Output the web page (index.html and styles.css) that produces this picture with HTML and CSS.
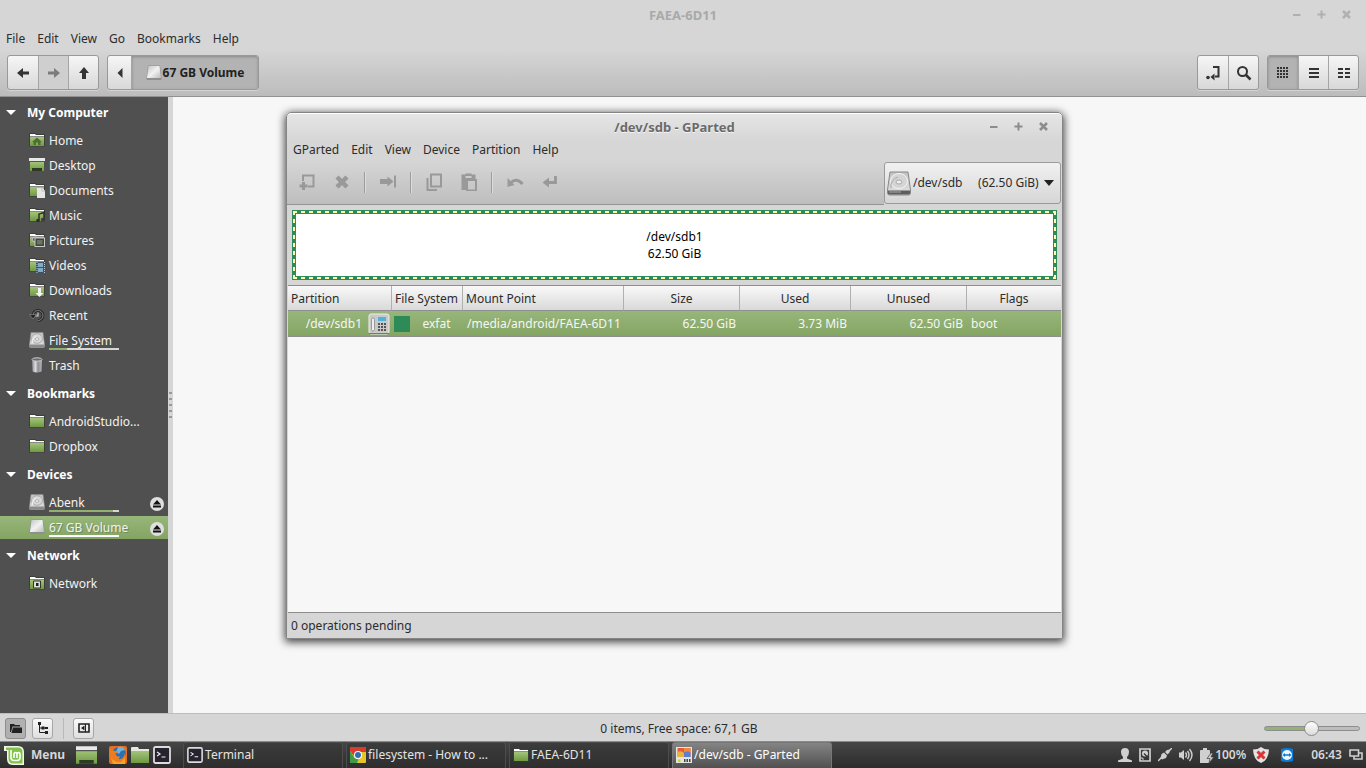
FILE: index.html
```html
<!DOCTYPE html>
<html lang="en">
<head>
<meta charset="utf-8">
<title>FAEA-6D11</title>
<link rel="stylesheet" href="styles.css">
</head>
<body>
<svg class="defs" aria-hidden="true">
  <defs>
    <linearGradient id="gGreen" x1="0" y1="0" x2="0" y2="1"><stop offset="0" stop-color="#a3c47a"/><stop offset="1" stop-color="#6f9a41"/></linearGradient>
    <linearGradient id="gSilver" x1="0" y1="0" x2="1" y2="1"><stop offset="0" stop-color="#c4c4c4"/><stop offset=".5" stop-color="#f2f2f2"/><stop offset="1" stop-color="#bcbcbc"/></linearGradient>
    <linearGradient id="gCan" x1="0" y1="0" x2="1" y2="0"><stop offset="0" stop-color="#8b8b8f"/><stop offset=".35" stop-color="#dcdce0"/><stop offset=".6" stop-color="#8e8e93"/><stop offset="1" stop-color="#b5b5ba"/></linearGradient>
    <linearGradient id="gDisk" x1="0" y1="0" x2="0" y2="1"><stop offset="0" stop-color="#c2c2c2"/><stop offset="1" stop-color="#e2e2e2"/></linearGradient>
  </defs>
  <symbol id="folder" viewBox="0 0 16 16">
    <path d="M0 14.500V2q0-1 1-1h5.500l1 1H15q1 0 1 1v11.500z" fill="#3b3f36"/>
    <path d="M1 2h5l1 1h8v1H1z" fill="#fff"/>
    <path d="M1 4h14v1H1z" fill="#8a8a8a"/>
    <path d="M1 5h14v9H1z" fill="url(#gGreen)"/>
  </symbol>
  <symbol id="desk" viewBox="0 0 16 16">
    <path d="M0 1h16v3H0z" fill="#e9e9ea"/><path d="M0 4h16v1H0z" fill="#555"/>
    <path d="M1 5h14v9H1z" fill="url(#gGreen)"/>
    <path d="M3 11h10v3H3z" fill="#2e3a22"/><path d="M.5 5v9" stroke="#456028"/>
  </symbol>
  <symbol id="disk" viewBox="0 0 16 16">
    <path d="M2 .5h12l1.500 12v2q0 1-1 1h-13q-1 0-1-1v-2z" fill="url(#gDisk)" stroke="#8d8d8d" stroke-width=".6"/>
    <path d="M.5 12.500h15v2q0 1-1 1h-13q-1 0-1-1z" fill="#8b8b8b"/>
    <ellipse cx="8" cy="6.500" rx="5.500" ry="4.800" fill="#d7d7d7" stroke="#aaa"/>
    <ellipse cx="8" cy="7" rx="1.800" ry="1.300" fill="#f5f5f5" stroke="#999" stroke-width=".7"/>
    <path d="M3.500 11q-.5-5 4-7" fill="none" stroke="#f4f4f4"/>
  </symbol>
  <symbol id="volume" viewBox="0 0 16 16">
    <path d="M2 .5h12l1.500 12.500v1q0 1-1 1h-13q-1 0-1-1v-1z" fill="#8f8f8f"/>
    <path d="M2.500 1h11l1.500 12H1z" fill="url(#gSilver)"/>
  </symbol>
  <symbol id="eject" viewBox="0 0 14 14">
    <circle cx="7" cy="7" r="7" fill="#dedede"/><path d="M7 3l4 4.500H3zM3 8.500h8v2H3z" fill="#111"/>
  </symbol>
  <symbol id="term" viewBox="0 0 18 18">
    <rect x="1" y="1" width="16" height="16" rx="1.500" fill="#26222e" stroke="#dcdcdc" stroke-width="1.800"/>
    <path d="M4 6l3 2-3 2M8.500 11h4" fill="none" stroke="#eee" stroke-width="1.200"/>
  </symbol>
</svg>

<div class="desktop">
  <section class="nemo">
    <header class="titlebar">
      <h1>FAEA-6D11</h1>
      <div class="winbtns faded">
        <button aria-label="Minimize"><svg width="9" height="9"><path d="M1 5h7.500" /></svg></button>
        <button aria-label="Maximize"><svg width="9" height="9"><path d="M.5 4.500h8M4.500.5v8"/></svg></button>
        <button aria-label="Close"><svg width="9" height="9"><path class="x" d="M1 1l7 7M8 1l-7 7"/></svg></button>
      </div>
    </header>
    <nav class="menubar">
      <button>File</button><button>Edit</button><button>View</button><button>Go</button><button>Bookmarks</button><button>Help</button>
    </nav>
    <div class="toolbar">
      <div class="group">
        <button class="tool" aria-label="Back"><svg width="14" height="12"><path d="M1 6l6-5v3.500h6v3H7V11z"/></svg></button>
        <button class="tool off" aria-label="Forward"><svg width="14" height="12"><path d="M13 6L7 1v3.500H1v3h6V11z"/></svg></button>
        <button class="tool" aria-label="Up"><svg width="12" height="14"><path d="M6 1L1 7h3v6h4V7h3z"/></svg></button>
      </div>
      <div class="group path">
        <button class="tool narrow" aria-label="Scroll left"><svg width="6" height="10"><path d="M5.500 0v10L.5 5z"/></svg></button>
        <button class="tool pressed crumb"><svg width="16" height="16"><use href="#volume"/></svg>67 GB Volume</button>
      </div>
      <div class="spring"></div>
      <div class="group">
        <button class="tool" aria-label="Toggle location"><svg width="16" height="16"><circle cx="3" cy="12.500" r="1.800"/><path d="M8 2h5.500v9.500H10" fill="none" stroke="#333" stroke-width="2"/><path d="M5.500 12l4-3.500v7z"/></svg></button>
        <button class="tool" aria-label="Search"><svg width="16" height="16"><circle cx="6.500" cy="6.500" r="4.500" fill="none" stroke="#333" stroke-width="2"/><path d="M10 10l4.500 4.500" stroke="#333" stroke-width="2.500"/></svg></button>
      </div>
      <div class="group">
        <button class="tool pressed" aria-label="Icon view"><svg width="12" height="11" shape-rendering="crispEdges"><path d="M0 0h2v2H0zM3 0h2v2H3zM6 0h2v2H6zM9 0h2v2H9zM0 3h2v2H0zM3 3h2v2H3zM6 3h2v2H6zM9 3h2v2H9zM0 6h2v2H0zM3 6h2v2H3zM6 6h2v2H6zM9 6h2v2H9zM0 9h2v2H0zM3 9h2v2H3zM6 9h2v2H6zM9 9h2v2H9z"/></svg></button>
        <button class="tool" aria-label="List view"><svg width="12" height="12"><path d="M1 2h10M1 6h10M1 10h10" stroke="#333" stroke-width="2"/></svg></button>
        <button class="tool" aria-label="Compact view"><svg width="12" height="12"><path d="M0 2h5M7 2h5M0 6h5M7 6h5M0 10h5M7 10h5" stroke="#333" stroke-width="2"/></svg></button>
      </div>
    </div>

    <div class="content">
      <aside class="sidebar">
        <button class="head"><i class="tri"></i>My Computer</button>
        <a href="#home"><svg class="ic" viewBox="0 0 16 16"><use href="#folder"/><path d="M8 5.500l5 4.500h-1.500v3h-7v-3H3z" fill="#4d7030"/><path d="M7 10.500h2V13H7z" fill="#86ab5a"/></svg><span>Home</span></a>
        <a href="#desktop"><svg class="ic"><use href="#desk"/></svg><span>Desktop</span></a>
        <a href="#documents"><svg class="ic" viewBox="0 0 16 16"><use href="#folder"/><path d="M8 6h5l3 3v7H8z" fill="#e6e6e6"/><path d="M13 6v3h3" fill="#fff" stroke="#999" stroke-width=".6"/></svg><span>Documents</span></a>
        <a href="#music"><svg class="ic" viewBox="0 0 16 16"><use href="#folder"/><path d="M10 13V7l5-1.500V12" fill="none" stroke="#2f2f2f" stroke-width="1.500"/><circle cx="9" cy="13.500" r="1.800" fill="#2f2f2f"/><circle cx="13.700" cy="12.500" r="1.800" fill="#3d3d3d"/></svg><span>Music</span></a>
        <a href="#pictures"><svg class="ic" viewBox="0 0 16 16"><use href="#folder"/><circle cx="6" cy="7.500" r="2.500" fill="#555" stroke="#ccc"/><rect x="6" y="6" width="9.500" height="8.500" fill="#42453e" stroke="#c9c9c9"/><path d="M8 8h5.500v4.500H8z" fill="#6c755f"/></svg><span>Pictures</span></a>
        <a href="#videos"><svg class="ic" viewBox="0 0 16 16"><use href="#folder"/><path d="M7 5h9v11H7z" fill="#3c5262"/><path d="M9 6h5v4H9zM9 11h5v4H9z" fill="#83abc5"/><path d="M8 5v11M15.500 5v11" stroke="#b9c9d3" stroke-dasharray="1 1"/></svg><span>Videos</span></a>
        <a href="#downloads"><svg class="ic" viewBox="0 0 16 16"><use href="#folder"/><path d="M9 6h3v5h2.500l-4 4-4-4H9z" fill="#f4f4f4"/></svg><span>Downloads</span></a>
        <a href="#recent"><svg class="ic" viewBox="0 0 16 16"><path d="M4 9a5 5 0 1 1 5 4.500" fill="none" stroke="#262626" stroke-width="2.800"/><path d="M4 9a5 5 0 1 1 5 4.500" fill="none" stroke="#858585" stroke-width="1"/><path d="M.5 7.500h7L4 12z" fill="#222" stroke="#858585" stroke-width=".7"/><path d="M9 5.500V9H6.500" fill="none" stroke="#ccc" stroke-width="1.200"/></svg><span>Recent</span></a>
        <a href="#filesystem"><svg class="ic"><use href="#disk"/></svg><span>File System</span><progress value="26" max="100" aria-label="File System usage"></progress></a>
        <a href="#trash"><svg class="ic" viewBox="0 0 16 16"><path d="M3 2.500h10l-.5 12q-4.500 2-9 0z" fill="url(#gCan)"/><ellipse cx="8" cy="2.500" rx="5" ry="1.700" fill="#6b6b6f" stroke="#ccccd0"/></svg><span>Trash</span></a>
        <button class="head"><i class="tri"></i>Bookmarks</button>
        <a href="#androidstudio"><svg class="ic"><use href="#folder"/></svg><span>AndroidStudio...</span></a>
        <a href="#dropbox"><svg class="ic"><use href="#folder"/></svg><span>Dropbox</span></a>
        <button class="head"><i class="tri"></i>Devices</button>
        <a href="#abenk"><svg class="ic"><use href="#disk"/></svg><span>Abenk</span><progress value="92" max="100" aria-label="Abenk usage"></progress><svg class="ej"><use href="#eject"/></svg></a>
        <a href="#volume67" class="current"><svg class="ic"><use href="#volume"/></svg><span>67 GB Volume</span><progress value="0" max="100" aria-label="67 GB Volume usage"></progress><svg class="ej"><use href="#eject"/></svg></a>
        <button class="head"><i class="tri"></i>Network</button>
        <a href="#network"><svg class="ic" viewBox="0 0 16 16"><use href="#folder"/><path d="M4.500 6h7v7h-7z" fill="#ddd" stroke="#333"/><path d="M7 8h2.500v3H7z" fill="#222"/></svg><span>Network</span></a>
      </aside>
      <div class="grip"><i></i><i></i><i></i><i></i><i></i></div>
      <main class="files"></main>
    </div>

    <footer class="status">
      <button class="mini pressed" aria-label="Show places"><svg width="12" height="10"><path d="M0 9V1h4l1 1h5v1.500H2.500L1 9zM3 4.500h9V10H1.500z"/></svg></button>
      <button class="mini" aria-label="Show tree"><svg width="12" height="12"><path d="M2.500 1v9.500H10M2.500 6H9" fill="none" stroke="#222"/><path d="M1 0h3v3H1zM4.500 4.500h3v3h-3zM8 9h3v3H8zM8 5h3v2H8z"/></svg></button>
      <i class="vsep"></i>
      <button class="mini" aria-label="Hide sidebar"><svg width="12" height="10"><path d="M1 1h10v8H1z" fill="none" stroke="#222" stroke-width="1.600"/><path d="M6.500 2.500v5L3 5zM7 1h1v8H7z"/></svg></button>
      <output>0 items, Free space: 67,1 GB</output>
      <input class="zoom" type="range" min="0" max="100" value="49" aria-label="Zoom">
    </footer>
  </section>

  <section class="gparted">
    <header class="titlebar">
      <h2>/dev/sdb - GParted</h2>
      <div class="winbtns">
        <button aria-label="Minimize"><svg width="9" height="9"><path d="M1 5h7.500"/></svg></button>
        <button aria-label="Maximize"><svg width="9" height="9"><path d="M.5 4.500h8M4.500.5v8"/></svg></button>
        <button aria-label="Close"><svg width="9" height="9"><path class="x" d="M1 1l7 7M8 1l-7 7"/></svg></button>
      </div>
    </header>
    <nav class="menubar">
      <button>GParted</button><button>Edit</button><button>View</button><button>Device</button><button>Partition</button><button>Help</button>
    </nav>
    <div class="gbar">
      <div class="gtools">
        <button aria-label="New" disabled><svg viewBox="0 0 18 18"><path d="M5 8V2.500h10.500v11H10" /><path d="M5.500 9v8M1.500 13h8" stroke-width="3"/></svg></button>
        <button aria-label="Delete" disabled><svg viewBox="0 0 18 18"><path d="M4 4l10 10M14 4L4 14" stroke-width="4.500"/></svg></button>
        <i class="gsep"></i>
        <button aria-label="Resize/Move" disabled><svg viewBox="0 0 18 18"><path d="M1 8.500h8" stroke-width="5"/><path d="M8.500 3.500v10l6-5z" fill="#999" stroke="none"/><path d="M16 2.500v12"/></svg></button>
        <i class="gsep"></i>
        <button aria-label="Copy" disabled><svg viewBox="0 0 18 18"><path d="M6 1.500h10v12H6z"/><path d="M2.500 5v12H12"/></svg></button>
        <button aria-label="Paste" disabled><svg viewBox="0 0 18 18"><path d="M1.500 1.500h4v-1h6v1h4V6h-9v11h-5z" fill="#999" stroke="none"/><path d="M7 7h9v10.500H7z"/><path d="M5.500 4h6" stroke="#ccc"/></svg></button>
        <i class="gsep"></i>
        <button aria-label="Undo" disabled><svg viewBox="0 0 18 18"><path d="M4.500 10q6-6 12 1" stroke-width="3"/><path d="M1.500 5v9l7-2z" fill="#999" stroke="none"/></svg></button>
        <button aria-label="Apply" disabled><svg viewBox="0 0 18 18"><path d="M14.500 3v6.500H7" stroke-width="2.800"/><path d="M1.500 9.500l6.500-5v10z" fill="#999" stroke="none"/></svg></button>
      </div>
      <div class="device">
        <svg width="24" height="25" viewBox="0 0 24 25"><path d="M3 1h18l2.500 18v3q0 2-2 2h-19q-2 0-2-2v-3z" fill="url(#gDisk)" stroke="#888"/><path d="M1 19.500h22V22q0 1.500-1.500 1.500h-19Q1 23.500 1 22z" fill="#5c5c5c"/><path d="M2 21h12" stroke="#aaa"/><ellipse cx="12" cy="10" rx="8.500" ry="7.500" fill="#d4d4d4" stroke="#f4f4f4"/><ellipse cx="12" cy="11" rx="3" ry="2" fill="#eee" stroke="#aaa"/><path d="M4 17q-1-8 7-11" fill="none" stroke="#aaa"/></svg>
        <select aria-label="Device"><option>/dev/sdb &nbsp;&nbsp;&nbsp; (62.50 GiB)</option></select>
        <i class="caret"></i>
      </div>
    </div>
    <div class="mapwrap">
      <div class="map"><span>/dev/sdb1</span><span>62.50 GiB</span></div>
    </div>
    <div class="list">
      <table>
        <colgroup><col class="c104"><col class="c71"><col class="c161"><col class="c116"><col class="c111"><col class="c116"><col></colgroup>
        <thead><tr><th class="l">Partition</th><th class="l">File System</th><th class="l">Mount Point</th><th>Size</th><th>Used</th><th>Unused</th><th>Flags</th></tr></thead>
        <tbody><tr>
          <td><div class="cell end">/dev/sdb1<svg width="22" height="22" viewBox="0 0 22 22"><rect x="1" y="1" width="20" height="20" rx="2" fill="#c9c9c9" stroke="#eee"/><path d="M1 20.500h20" stroke="#777"/><rect x="3.500" y="5" width="3" height="13" rx="1.500" fill="#eee" stroke="#888" stroke-width=".8"/><path d="M10 4h8v4h-8z" fill="#4fb4dc"/><path d="M10 11h8M10 14h8M10 17h8" stroke="#555" stroke-width="2" stroke-dasharray="2 1"/></svg></div></td>
          <td><div class="cell"><i class="swatch"></i><span class="fs">exfat</span></div></td>
          <td class="l">/media/android/FAEA-6D11</td><td class="r">62.50 GiB</td><td class="r">3.73 MiB</td><td class="r">62.50 GiB</td><td class="l">boot</td>
        </tr></tbody>
      </table>
    </div>
    <footer class="pending">0 operations pending</footer>
  </section>
</div>

<footer class="panel">
  <button class="mint"><svg width="20" height="19" viewBox="0 0 20 19"><path d="M0 0h14q6 0 6 6v13H9q-6 0-6-6V5H0z" fill="#f2f8e8"/><path d="M2 1.500h12q4.500 0 4.500 4.500v11.500H9.500q-5 0-5-5V4H2z" fill="#83c34b"/><path d="M7 4v7.500q0 3 3 3h3q3 0 3-3V8.500q0-2-1.500-2T13 8.500V12M13 8.500q0-2-1.500-2T10 8.500V12" fill="none" stroke="#fff" stroke-width="1.600"/></svg>Menu</button>
  <div class="launch">
    <button class="showdesk" aria-label="Show desktop"><svg width="21" height="20" viewBox="0 0 16 16" preserveAspectRatio="none"><path d="M0 1h16v3H0z" fill="#e9e9ea"/><path d="M0 4h16v11H0z" fill="url(#gGreen)"/><path d="M0 4h16v1H0z" fill="#555"/><path d="M2.500 12h11v3h-11z" fill="#2e3a22"/></svg></button>
    <button aria-label="Firefox"><svg width="18" height="18" viewBox="0 0 18 18"><rect width="18" height="18" rx="2" fill="#e8701c"/><circle cx="10" cy="8" r="7" fill="#2b6fb4"/><path d="M9 1q5-1 7 3l-4 1-2 3-3-2z" fill="#6db4df"/><path d="M1 3q3 0 4 2 3-1 4 1L6.500 8q1 3 4 2.500 1 1-1 2.500 5 1 6.500-6 3 8-4 10-7 2-11-5-1-5 0-9z" fill="#ed7b20"/><path d="M2 12q4 5 10 4l4-4v6H4z" fill="#f5a52a"/></svg></button>
    <button aria-label="Files"><svg width="18" height="18" viewBox="0 0 18 18"><path d="M0 2q0-1 1-1h6l1 2h10v4H0z" fill="#e4e8dd"/><path d="M0 5h18v12H0z" fill="url(#gGreen)"/></svg></button>
    <button aria-label="Terminal"><svg width="18" height="18"><use href="#term"/></svg></button>
  </div>
  <div class="tasks">
    <button><svg width="16" height="16"><use href="#term"/></svg>Terminal</button>
    <button><svg width="16" height="16" viewBox="0 0 16 16"><rect width="16" height="16" rx="1" fill="#e8c42b"/><path d="M0 0h16v5H8L4.500 9.500 0 4z" fill="#d93b2f"/><path d="M0 4l4.500 7 4 1.500L7 16H0z" fill="#3f9c4a"/><circle cx="8" cy="8" r="4" fill="#fff"/><circle cx="8" cy="8" r="3" fill="#2f6fb8"/></svg>filesystem - How to ...</button>
    <button><svg width="16" height="16"><use href="#folder"/></svg>FAEA-6D11</button>
    <button class="active"><svg width="16" height="16" viewBox="0 0 16 16"><rect width="16" height="16" fill="#e4e4e4"/><path d="M1.500 1h13v9h-13z" fill="#e45b38"/><path d="M8 1h6.500v5L8 5z" fill="#ee883c"/><path d="M1.500 5Q5 3 8 6v4H1.500z" fill="#e8b43b"/><path d="M8 5.500q4-2 6.500 0V10H8z" fill="#5b7fd3"/><path d="M2 12.500h2.500V15H2z" fill="#c5d62c"/><path d="M8 13.500h7" stroke="#444" stroke-width="3" stroke-dasharray="1.500 1"/></svg>/dev/sdb - GParted</button>
  </div>
  <div class="tray">
    <svg width="14" height="14" viewBox="0 0 14 14"><path d="M7 0q4 0 4 4 0 3-2 5v1.500l5 2V14H0v-1.500l5-2V9Q3 7 3 4q0-4 4-4z"/></svg>
    <svg width="12" height="14" viewBox="0 0 12 14"><path d="M1 1h10v12H1z" fill="none" stroke="#d0d0d0" stroke-width="1.700"/><circle cx="6" cy="5.500" r="3"/><path d="M5 5.500l5 5" stroke="#3a3a3a" stroke-width="1.500"/><path d="M3 9v2h2" stroke="#d0d0d0" fill="none"/></svg>
    <svg width="14" height="14" viewBox="0 0 14 14"><path d="M0 13l4-4M10 4l4-4" stroke="#d0d0d0" stroke-width="1.500"/><path d="M2.500 10l1-4L6 4.500l3 3L8 10l-4 1.500zM7 4l2-2 3-.5-.5 3-2 2z"/></svg>
    <svg width="14" height="14" viewBox="0 0 14 14"><path d="M0 4.500h2L5 2v10L2 9.500H0z"/><path d="M6.500 4.500q2 2.500 0 5M8.500 3q3 4 0 8M10.500 1q5 6 0 12" fill="none" stroke="#d0d0d0" stroke-width="1.400"/></svg>
    <span class="battery"><svg width="14" height="15" viewBox="0 0 14 15"><path d="M0 3q0-1 1-1h2V0h4v2h2q1 0 1 1v12H0z"/><path d="M11 5L7 10.500h3L9 15l5-6h-3l2-4z" stroke="#3a3a3a" stroke-width=".7"/></svg>100%</span>
    <svg class="shield" width="16" height="16" viewBox="0 0 16 16"><path d="M8 0q3 2.500 8 2.500-.5 11-8 13.500Q.5 13.500 0 2.500 5 2.500 8 0z" fill="#e2e2e0"/><path d="M4.500 4.500l7 7M11.500 4.500l-7 7" stroke="#d8343a" stroke-width="3"/></svg>
    <svg class="tv" width="12" height="14" viewBox="0 0 12 14"><path d="M0 1q6-2 12 0v12q-6 2-12 0z" fill="#0c7bd8"/><circle cx="6" cy="7" r="5" fill="#eaf5ff"/><path d="M1.500 7L4 5v1.300h4V5l2.500 2L8 9V7.700H4V9z" fill="#1475c9"/></svg>
    <time>06:43</time>
    <svg class="wins" width="14" height="12" viewBox="0 0 14 12"><path d="M1 1h8.500v6H1zM5 7v3h8V4H9.500" fill="none" stroke="#d0d0d0" stroke-width="1.600"/></svg>
  </div>
</footer>
</body>
</html>
```

FILE: styles.css
```css
* { box-sizing: border-box; }
html, body { height: 100%; }
body {
  margin: 0;
  display: flex;
  flex-direction: column;
  overflow: hidden;
  font: 12px/16px "Noto Sans", "Open Sans", sans-serif;
  color: #2c2c2c;
  background: #d6d6d6;
}
button, select, input {
  font: inherit;
  color: inherit;
  margin: 0;
  padding: 0;
  border: 0;
  background: none;
}
a { color: inherit; text-decoration: none; }
svg { display: block; flex: none; }
.defs { position: absolute; width: 0; height: 0; }

.desktop { position: relative; flex: 1; min-height: 0; display: flex; }
.nemo { flex: 1; display: flex; flex-direction: column; min-width: 0; }

/* window chrome */
.titlebar {
  display: grid;
  grid-template-columns: 80px 1fr 80px;
  align-items: center;
  height: 28px;
  text-shadow: 0 1px #f4f4f4;
}
.titlebar h1, .titlebar h2 {
  grid-column: 2;
  margin: 0;
  padding-top: 2px;
  font-size: 13px;
  line-height: 16px;
  text-align: center;
  color: #6a6a6a;
}
.titlebar h1 { color: #a9a9a9; text-shadow: none; }
.winbtns { display: flex; justify-content: flex-end; gap: 16px; padding-right: 15px; }
.winbtns path { fill: none; stroke: #8c8c8c; stroke-width: 2; }
.winbtns .x { stroke-width: 2.500; }
.winbtns.faded path { stroke: #b0b0b0; }
.menubar { display: flex; gap: 12px; padding: 0 6px; height: 21px; align-items: center; }

.toolbar {
  display: flex;
  align-items: center;
  gap: 8px;
  height: 48px;
  padding: 0 7px;
  border-bottom: 1px solid #919191;
  background: linear-gradient(#d6d6d6, #bcbcbc);
}
.group {
  display: flex;
  height: 35px;
  border: 1px solid #999;
  border-radius: 3px;
  background: linear-gradient(#f6f6f6, #d8d8d8);
  box-shadow: 0 1px #d4d4d4;
  overflow: hidden;
}
.tool { width: 30px; display: flex; align-items: center; justify-content: center; fill: #333; }
.tool + .tool { border-left: 1px solid #a5a5a5; }
.tool.narrow { width: 23px; }
.tool.off { background: #cfcfcf; fill: #7c7c7c; }
.tool.pressed { background: #b3b3b3; box-shadow: inset 0 1px 3px #888; }
.tool.crumb { width: 127px; gap: 1px; font-weight: bold; color: #222; }
.spring { flex: 1; }

.content { flex: 1; min-height: 0; display: flex; }
.sidebar {
  width: 168px;
  padding-top: 1px;
  display: flex;
  flex-direction: column;
  gap: 2px;
  background: #505050;
  color: #f2f2f2;
}
.sidebar .head {
  display: flex;
  align-items: center;
  gap: 11px;
  height: 29px;
  padding-left: 6px;
  font-weight: bold;
  color: #fff;
}
.tri { border: 5px solid transparent; border-top-color: #fff; border-bottom: 0; }
.sidebar a {
  display: grid;
  grid-template-columns: 16px 1fr 14px;
  grid-template-rows: 19px 2px;
  column-gap: 4px;
  align-content: start;
  align-items: start;
  height: 23px;
  padding: 0 4px 0 29px;
}
.sidebar a.current { background: linear-gradient(#97b67a, #84a463); text-shadow: 1px 1px #70895a; }
.sidebar span { white-space: nowrap; padding-top: 4px; }
.ic { width: 16px; height: 16px; margin-top: 3px; grid-row: 1 / 3; }
.ej { width: 14px; height: 14px; margin-top: 6px; grid-column: 3; grid-row: 1 / 3; }
progress {
  grid-column: 2;
  grid-row: 2;
  width: 70px;
  height: 2px;
  appearance: none;
  border: 0;
}
progress::-webkit-progress-bar { background: #d6d6d6; }
progress::-webkit-progress-value { background: #8fb06f; }
.current progress::-webkit-progress-bar { background: #fff; }
.grip { width: 5px; display: flex; flex-direction: column; justify-content: center; align-items: center; gap: 4px; background: #d6d6d6; }
.grip i { width: 3px; height: 2px; background: #999; }
.files { flex: 1; background: #f7f7f7; }

.status {
  display: flex;
  align-items: center;
  height: 29px;
  padding: 1px 6px 0 5px;
  border-top: 1px solid #bdbdbd;
  border-bottom: 1px solid #8a8a8a;
}
.mini {
  width: 21px;
  height: 21px;
  display: grid;
  place-items: center;
  border: 1px solid #a6a6a6;
  border-radius: 3px;
  background: linear-gradient(#fafafa, #dedede);
  fill: #222;
}
.mini + .mini { margin-left: 6px; }
.mini.pressed { background: #b0b0b0; border-color: #8d8d8d; }
.vsep { width: 1px; height: 21px; margin: 0 9px 0 10px; background: #b8b8b8; }
.status output { flex: 1; padding-top: 2px; text-align: center; }
.zoom { appearance: none; width: 96px; height: 16px; }
.zoom::-webkit-slider-runnable-track {
  height: 5px;
  border: 1px solid #8d8d8d;
  border-radius: 3px;
  background: linear-gradient(90deg, #93b374 50%, #bdbdbd 50%);
}
.zoom::-webkit-slider-thumb {
  appearance: none;
  width: 15px;
  height: 15px;
  margin-top: -6px;
  border: 1px solid #8a8a8a;
  border-radius: 50%;
  background: linear-gradient(#fdfdfd, #dcdcdc);
}

/* floating partition editor window */
.gparted {
  position: absolute;
  left: 286px;
  top: 112px;
  width: 777px;
  height: 527px;
  display: flex;
  flex-direction: column;
  border: 1px solid #858585;
  border-radius: 5px 5px 0 0;
  background: linear-gradient(#e6e6e6, #d6d6d6 28px);
  box-shadow: inset 0 1px #fff, 0 2px 8px 1px rgba(0, 0, 0, .75);
}
.gparted .titlebar { height: 26px; }
.gparted .winbtns { padding-right: 14px; }
.gbar { display: flex; height: 45px; }
.gtools {
  flex: 1;
  display: flex;
  align-items: center;
  padding-left: 2px;
  border-bottom: 1px solid #939393;
  background: linear-gradient(#d6d6d6, #bebebe);
}
.gtools button { width: 35px; display: grid; place-items: center; }
.gtools svg { width: 18px; height: 18px; fill: none; stroke: #999; stroke-width: 2; }
.gsep { width: 1px; height: 21px; margin: 0 5px; background: #9c9c9c; box-shadow: 1px 0 #ddd; }
.device {
  display: flex;
  align-items: center;
  gap: 2px;
  width: 177px;
  margin: 2px 1px 1px 0;
  padding: 0 6px 0 2px;
  border: 1px solid #9a9a9a;
  border-radius: 3px;
  background: linear-gradient(#f1f1f1, #d6d6d6);
}
.device select { appearance: none; flex: 1; min-width: 0; height: 24px; white-space: pre; }
.caret { border: 5px solid transparent; border-top: 6px solid #222; border-bottom: 0; }
.mapwrap { padding: 5px; }
.map {
  --dash: #ffffb0 0 4px, #2e8b57 4px 8px;
  height: 70px;
  padding: 17px 0;
  display: flex;
  flex-direction: column;
  align-items: center;
  line-height: 17px;
  color: #000;
  border: 1px solid #2e8b57;
  background:
    repeating-linear-gradient(90deg, var(--dash)) 0 0 / 100% 2px no-repeat,
    repeating-linear-gradient(90deg, var(--dash)) 0 100% / 100% 2px no-repeat,
    repeating-linear-gradient(var(--dash)) 0 0 / 2px 100% no-repeat,
    repeating-linear-gradient(var(--dash)) 100% 0 / 2px 100% no-repeat,
    #fff;
  outline: 1px solid #2e8b57;
  outline-offset: -4px;
}
.list { flex: 1; border: 1px solid #8e8e8e; border-width: 1px 0; margin: 0 1px; background: #f7f7f7; }
table { width: 100%; table-layout: fixed; border-collapse: separate; border-spacing: 0; }
.c104 { width: 104px; }
.c71 { width: 71px; }
.c161 { width: 161px; }
.c116 { width: 116px; }
.c111 { width: 111px; }
th, td { padding: 0 3px; white-space: nowrap; font-weight: normal; text-align: center; }
th {
  height: 25px;
  padding-top: 2px;
  border-right: 1px solid #b0b0b0;
  border-bottom: 1px solid #8e8e8e;
  background: linear-gradient(#f9f9f9, #d9d9d9);
}
th:last-child { border-right: 0; }
tbody tr { background: linear-gradient(#97b67a, #84a463); color: #f6f6f6; }
td { height: 26px; border-bottom: 1px solid #8e8e8e; }
th.l, td.l { text-align: left; }
td.l { padding-left: 4px; }
td.r { text-align: right; padding-right: 4px; }
.cell { display: flex; align-items: center; }
.cell.end { justify-content: flex-end; gap: 6px; margin-right: -1px; }
.swatch { width: 16px; height: 16px; background: #2e8b57; margin-left: -1px; }
.fs { flex: 1; text-align: center; padding-left: 3px; }
.pending { height: 25px; padding: 5px 4px 4px; }

/* desktop panel */
.panel {
  display: flex;
  align-items: center;
  height: 26px;
  padding: 0 3px 0 4px;
  background: linear-gradient(#464646, #2c2c2c);
  color: #e4e4e4;
}
.mint { display: flex; align-items: center; gap: 7px; font-weight: bold; color: #d6d6d6; }
.launch { display: flex; align-items: center; gap: 4px; margin-left: 11px; }
.showdesk { margin-right: 8px; }
.tasks { flex: 1; display: flex; gap: 3px; margin-left: 12px; }
.tasks button {
  width: 160px;
  height: 26px;
  display: flex;
  align-items: center;
  gap: 2px;
  padding: 0 3px 2px;
  border: 1px solid #4d4d4d;
  border-bottom: 0;
  border-radius: 3px 3px 0 0;
  white-space: nowrap;
  background: linear-gradient(#3c3c3c, #2e2e2e);
}
.tasks .active { background: linear-gradient(#848484, #505050); border-color: #777; color: #fff; }
.tray { display: flex; align-items: center; gap: 7px; font-weight: 600; color: #d6d6d6; fill: #d0d0d0; }
.battery { display: flex; align-items: center; gap: 1px; }
.tv { margin-left: 5px; }
.tray time { margin-left: 11px; }
```
